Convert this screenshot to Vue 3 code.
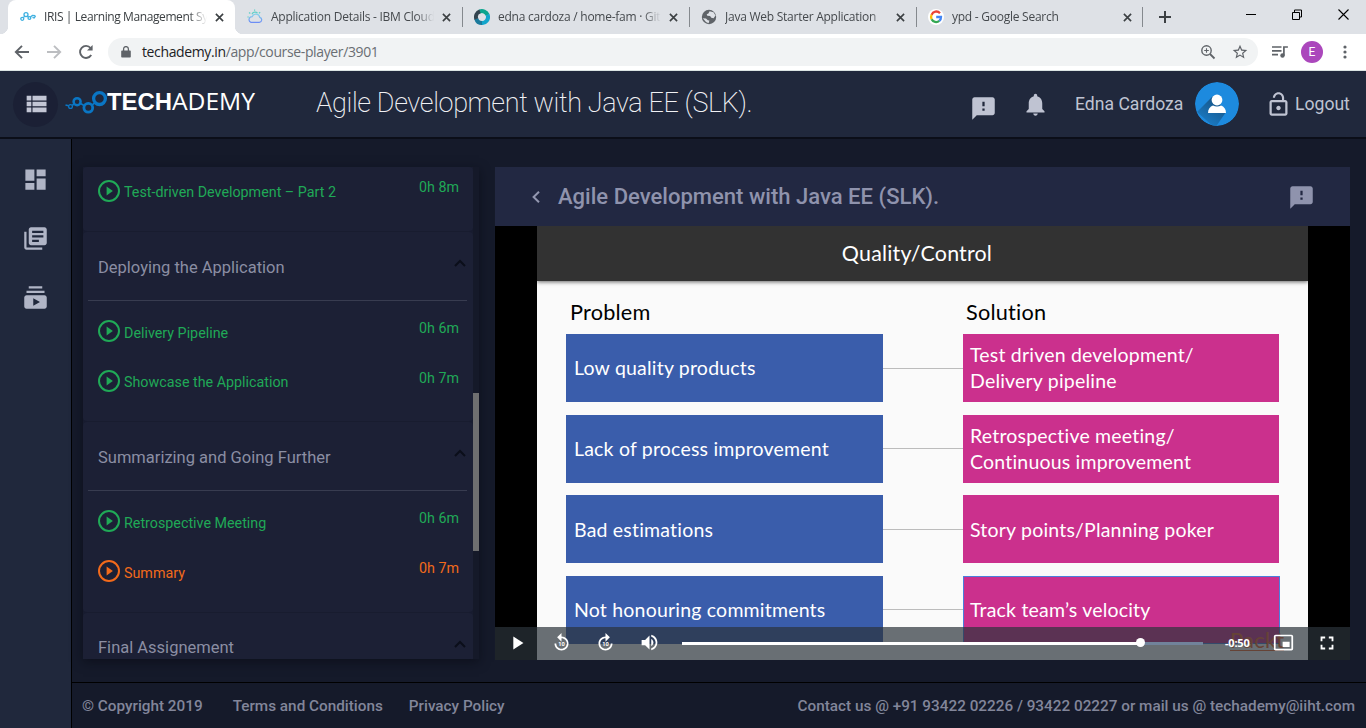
<script setup>
const tabs = [
  { title: 'IRIS | Learning Management System', icon: 'iris', active: true },
  { title: 'Application Details - IBM Cloud', icon: 'cloud' },
  { title: 'edna cardoza / home-fam · GitHub', icon: 'ring' },
  { title: 'Java Web Starter Application', icon: 'globe' },
  { title: 'ypd - Google Search', icon: 'google' },
]
const sections = [
  { items: [{ name: 'Test-driven Development – Part 2', time: '0h 8m' }] },
  {
    title: 'Deploying the Application',
    items: [
      { name: 'Delivery Pipeline', time: '0h 6m' },
      { name: 'Showcase the Application', time: '0h 7m' },
    ],
  },
  {
    title: 'Summarizing and Going Further',
    items: [
      { name: 'Retrospective Meeting', time: '0h 6m' },
      { name: 'Summary', time: '0h 7m', current: true },
    ],
  },
  { title: 'Final Assignement', items: [] },
]
const rows = [
  { problem: 'Low quality products', solution: ['Test driven development/', 'Delivery pipeline'] },
  { problem: 'Lack of process improvement', solution: ['Retrospective meeting/', 'Continuous improvement'] },
  { problem: 'Bad estimations', solution: ['Story points/Planning poker'] },
  { problem: 'Not honouring commitments', solution: ['Track team’s velocity'], selected: true },
]
const sideIcons = [
  'M3 13h8V3H3v10zm0 8h8v-6H3v6zm10 0h8V11h-8v10zm0-18v6h8V3h-8z',
  'M4 6H2v14c0 1.1.9 2 2 2h14v-2H4V6zm16-4H8c-1.1 0-2 .9-2 2v12c0 1.1.9 2 2 2h12c1.1 0 2-.9 2-2V4c0-1.1-.9-2-2-2zm-1 9H9V9h10v2zm-4 4H9v-2h6v2zm4-8H9V5h10v2z',
  'M20 8H4V6h16v2zm-2-6H6v2h12V2zm4 10v8c0 1.1-.9 2-2 2H4c-1.1 0-2-.9-2-2v-8c0-1.1.9-2 2-2h16c1.1 0 2 .9 2 2zm-6 4l-6-3.27v6.53L16 16z',
]
const feedback =
  'M20 2H4c-1.1 0-1.99.9-1.99 2L2 22l4-4h14c1.1 0 2-.9 2-2V4c0-1.1-.9-2-2-2zm-7 12h-2v-2h2v2zm0-4h-2V6h2v4z'
</script>

<template>
  <div class="window">
    <div class="tabstrip">
      <div v-for="t in tabs" :key="t.title" class="tab" :class="{ active: t.active }">
        <svg class="fav" viewBox="0 0 16 16">
          <g v-if="t.icon === 'iris'" fill="none" stroke="#3fb0e0" stroke-width="1.3">
            <circle cx="2.3" cy="9.8" r="1.5" /><circle cx="6" cy="5.6" r="2" /><circle cx="9.4" cy="9" r="1.4" />
            <path d="M3.3 8.6l1.4-1.4M7.4 7l1 1M10.4 8l2-1.5 3 .2M12.5 8.4l1.6.6 1.4-2" />
          </g>
          <g v-else-if="t.icon === 'cloud'" fill="none" stroke-width="1.2">
            <path d="M4 13.4h8.3a2.6 2.6 0 0 0 .5-5.1A4 4 0 0 0 5.2 7.6 3 3 0 0 0 4 13.4z" stroke="url(#cloudfill)" />
            <path d="M5 5.3A3.4 3.4 0 0 1 10.5 4M2 3.4l1.3 1M7.6.4v1.4M13.2 3.2l-1.3 1M.4 8h1.4" stroke="#62d0c8" />
            <defs>
              <linearGradient id="cloudfill" x1="0" y1="0" x2="0" y2="1">
                <stop offset="0" stop-color="#86d3ea" /><stop offset="1" stop-color="#6c8df5" />
              </linearGradient>
            </defs>
          </g>
          <g v-else-if="t.icon === 'ring'" fill="none" stroke-width="4">
            <path d="M5.5 2.6A6 6 0 0 1 13.6 6" stroke="#0aa58e" />
            <path d="M13.5 5.6A6 6 0 0 1 7 13.9" stroke="#12a5cb" />
            <path d="M8 14A6 6 0 0 1 2.2 9.6" stroke="#1b7a9c" />
            <path d="M2.3 10A6 6 0 0 1 6 2.4" stroke="#33444f" />
          </g>
          <g v-else-if="t.icon === 'globe'">
            <circle cx="8" cy="8" r="7.2" fill="#5f6368" />
            <path d="M1.800 9.200l3.200.3 1.800 1.700 1.600.3-.8 2.700-2.600-1.200zM8.600 2.200L7.400 4.600 5.700 5.300l.6 1.500 2.800.2 1.200 1.800 2.300.5 1.900-2.800-2-3.300z" fill="#dee1e6" />
          </g>
          <g v-else>
            <circle cx="8" cy="8" r="8" fill="#fff" />
            <g fill="none" stroke-width="2.3">
              <path d="M12 4.2A5 5 0 0 0 3.6 5.8" stroke="#ea4335" />
              <path d="M3.6 5.8a5 5 0 0 0 0 4.5" stroke="#fbbc05" />
              <path d="M3.6 10.3a5 5 0 0 0 7.7 1.6" stroke="#34a853" />
              <path d="M11.3 11.9A5 5 0 0 0 13 8H8.2" stroke="#4285f4" />
            </g>
          </g>
        </svg>
        <span class="tabtitle">{{ t.title }}</span>
        <svg class="close" viewBox="0 0 10 10"><path d="M1 1l8 8M9 1L1 9" /></svg>
      </div>
      <svg class="newtab" viewBox="0 0 12 12"><path d="M6 0v12M0 6h12" stroke="#3c4043" stroke-width="2" /></svg>
      <svg class="wincontrols" viewBox="0 0 104 12" fill="none" stroke="#000">
        <path d="M0 6.5h10" />
        <path d="M46.500 4.500h7v7h-7zM48.500 4.500v-2.500h7v7h-2" />
        <path d="M92.500 1.500l10 10M102.500 1.500l-10 10" stroke-width="1.1" />
      </svg>
    </div>

    <div class="toolbar">
      <svg class="nav" viewBox="0 0 16 16"><path d="M15 8H2M8 1.800L1.800 8 8 14.200" /></svg>
      <svg class="nav dim" viewBox="0 0 16 16"><path d="M1 8h13M8 1.800L14.200 8 8 14.200" /></svg>
      <svg class="nav" viewBox="0 0 16 16"><path d="M13.200 11A6 6 0 1 1 12.600 4" /><path d="M14.600 1v5.600H9z" class="solid" /></svg>
      <div class="omnibox">
        <svg class="lock" viewBox="0 0 10 12"><path d="M1 4.500h8a.8.800 0 0 1 .8.800v5.400a.8.800 0 0 1-.8.800H1a.8.800 0 0 1-.8-.8V5.300A.8.800 0 0 1 1 4.500z" fill="#5f6368" /><path d="M2.600 5V3a2.400 2.400 0 0 1 4.800 0v2" fill="none" stroke="#5f6368" stroke-width="1.300" /></svg>
        <span class="url"><b>techademy.in</b>/app/course-player/3901</span>
        <svg class="obicon" viewBox="0 0 16 16" fill="none" stroke="#5f6368" stroke-width="1.400"><circle cx="6.500" cy="6.500" r="4.700" /><path d="M10 10l4.500 4.500" stroke-width="1.800" /><path d="M6.500 4.200v4.600M4.200 6.500h4.600" stroke-width="1.100" /></svg>
        <svg class="obicon star" viewBox="1 1 22 22" fill="#5f6368"><path d="M22 9.240l-7.190-.62L12 2 9.190 8.630 2 9.240l5.460 4.730L5.820 21 12 17.270 18.180 21l-1.630-7.030L22 9.240zM12 15.400l-3.760 2.270 1-4.280-3.320-2.880 4.380-.38L12 6.100l1.710 4.040 4.380.38-3.320 2.880 1 4.280L12 15.400z" /></svg>
      </div>
      <svg class="queue" viewBox="0 0 16 14" fill="none" stroke="#5f6368"><path d="M0 2h9.500M0 5.800h9.500M0 9.600h6" stroke-width="1.700" /><circle cx="10.500" cy="10.500" r="2.200" fill="#5f6368" stroke="none" /><path d="M11.900 10.500V2h4" stroke-width="1.700" /></svg>
      <span class="profile">E</span>
      <svg class="dots" viewBox="0 0 4 14" fill="#5f6368"><circle cx="2" cy="2" r="1.600" /><circle cx="2" cy="7" r="1.600" /><circle cx="2" cy="12" r="1.600" /></svg>
    </div>

    <header class="appbar">
      <span class="menu"><svg viewBox="0 0 24 24"><path d="M4 14h4v-4H4v4zm0 5h4v-4H4v4zM4 9h4V5H4v4zm5 5h12v-4H9v4zm0 5h12v-4H9v4zM9 5v4h12V5H9z" /></svg></span>
      <svg class="logo" viewBox="0 0 192 30">
        <g fill="none" stroke="#0a76c4">
          <circle cx="34.500" cy="10.600" r="5.900" stroke-width="3.300" />
          <circle cx="23.300" cy="19.800" r="4.400" stroke-width="2.800" />
          <circle cx="12.100" cy="13.700" r="3.500" stroke-width="2.500" />
          <circle cx="5.500" cy="18.500" r="1.900" stroke-width="1.300" />
          <path d="M.5 17l3 .8M7.200 17.300l2-1.200M15.500 15.500l4 2.200M27 17.200l3-2.600" stroke-width="1.600" />
        </g>
        <text x="42" y="22" class="bold" textLength="65" lengthAdjust="spacingAndGlyphs">TECH</text>
        <text x="107" y="22" class="light" textLength="83" lengthAdjust="spacingAndGlyphs">ADEMY</text>
      </svg>
      <h1>Agile Development with Java EE (SLK).</h1>
      <svg class="hicon fb" viewBox="0 0 24 24"><path :d="feedback" /></svg>
      <svg class="hicon bell" viewBox="0 0 24 24"><path d="M12 22c1.100 0 2-.9 2-2h-4c0 1.100.89 2 2 2zm6-6v-5c0-3.070-1.640-5.640-4.500-6.320V4c0-.83-.67-1.500-1.500-1.500s-1.500.67-1.500 1.500v.68C7.630 5.360 6 7.920 6 11v5l-2 2v1h16v-1l-2-2z" /></svg>
      <span class="user">Edna Cardoza</span>
      <svg class="avatar" viewBox="0 0 44 44">
        <defs>
          <clipPath id="disc"><circle cx="22" cy="22" r="22" /></clipPath>
          <linearGradient id="shade" x1="0.800" y1="0" x2="0.200" y2="1">
            <stop offset="0" stop-color="#164e7c" /><stop offset="1" stop-color="#1b82d0" />
          </linearGradient>
        </defs>
        <g clip-path="url(#disc)">
          <circle cx="22" cy="22" r="22" fill="#1d8ade" />
          <path d="M18 14L2 30l18 16 11-16z" fill="url(#shade)" />
          <circle cx="22" cy="18" r="5.400" fill="#fff" />
          <path d="M13 31c0-4 2-6.500 5-7.500 2.500 1.400 5.500 1.400 8 0 3 1 5 3.500 5 7.500z" fill="#fff" />
        </g>
      </svg>
      <svg class="hicon lockopen" viewBox="0 0 24 24"><path d="M12 17c1.100 0 2-.9 2-2s-.9-2-2-2-2 .9-2 2 .9 2 2 2zm6-9h-1V6c0-2.760-2.240-5-5-5S7 3.240 7 6h1.900c0-1.710 1.390-3.100 3.100-3.100 1.710 0 3.100 1.390 3.100 3.100v2H6c-1.100 0-2 .9-2 2v10c0 1.100.9 2 2 2h12c1.100 0 2-.9 2-2V10c0-1.100-.9-2-2-2zm0 12H6V10h12v10z" /></svg>
      <span class="logout">Logout</span>
    </header>

    <div class="body">
      <nav class="sidebar">
        <svg v-for="d in sideIcons" :key="d" viewBox="0 0 24 24"><path :d="d" /></svg>
      </nav>
      <div class="content">
        <main class="main">
          <div class="course">
            <div class="list">
              <section v-for="(s, i) in sections" :key="i" class="card" :class="{ first: !s.title }">
                <div v-if="s.title" class="cardhead">
                  <span>{{ s.title }}</span>
                  <svg viewBox="0 0 12 8"><path d="M1 7l5-5 5 5" /></svg>
                </div>
                <div v-for="it in s.items" :key="it.name" class="lesson" :class="{ current: it.current }">
                  <svg viewBox="0 0 22 22"><circle cx="11" cy="11" r="10" /><path d="M8.600 6.500v9l6.300-4.500z" /></svg>
                  <span class="name">{{ it.name }}</span>
                  <span class="time">{{ it.time }}</span>
                </div>
              </section>
            </div>
            <div class="scroll"><i></i></div>
          </div>

          <div class="player">
            <div class="playerhead">
              <svg class="back" viewBox="0 0 8 12"><path d="M7 .8L1.600 6 7 11.200" /></svg>
              <h2>Agile Development with Java EE (SLK).</h2>
              <svg class="pfb" viewBox="0 0 24 24"><path :d="feedback" /></svg>
            </div>
            <div class="video">
              <div class="slide">
                <div class="slidetitle">Quality/Control</div>
                <div class="heads"><span>Problem</span><span>Solution</span></div>
                <div class="rows">
                  <div v-for="r in rows" :key="r.problem" class="row">
                    <div class="box blue">{{ r.problem }}</div>
                    <i class="line"></i>
                    <div class="box pink" :class="{ selected: r.selected }">
                      <span v-for="l in r.solution" :key="l">{{ l }}</span>
                    </div>
                  </div>
                </div>
                <span class="mark">Packt</span>
              </div>
              <div class="controls">
                <svg class="play" viewBox="0 0 24 24"><path d="M8 5v14l11-7z" /></svg>
                <svg class="ctl" viewBox="0 0 24 24"><path d="M12 5V1L7 6l5 5V7c3.310 0 6 2.690 6 6s-2.690 6-6 6-6-2.690-6-6H4c0 4.420 3.580 8 8 8s8-3.580 8-8-3.580-8-8-8z" /><text x="12" y="15.800">10</text></svg>
                <svg class="ctl" viewBox="0 0 24 24"><path d="M12 5V1l5 5-5 5V7c-3.310 0-6 2.690-6 6s2.690 6 6 6 6-2.690 6-6h2c0 4.420-3.580 8-8 8s-8-3.580-8-8 3.580-8 8-8z" /><text x="12" y="15.800">10</text></svg>
                <svg class="ctl" viewBox="0 0 24 24"><path d="M3 9v6h4l5 5V4L7 9H3zm13.500 3c0-1.770-1.020-3.290-2.500-4.030v8.050c1.480-.73 2.500-2.250 2.500-4.020zM14 3.230v2.060c2.890.86 5 3.540 5 6.710s-2.110 5.850-5 6.710v2.060c4.010-.91 7-4.490 7-8.770s-2.990-7.860-7-8.770z" /></svg>
                <div class="track"><i class="played"></i><i class="knob"></i><i class="buffered"></i></div>
                <span class="remain">-0:50</span>
                <svg class="pip" viewBox="0 0 24 24"><path d="M19 11h-8v6h8v-6zm4 8V4.980C23 3.880 22.100 3 21 3H3c-1.100 0-2 .88-2 1.980V19c0 1.100.9 2 2 2h18c1.100 0 2-.9 2-2zm-2 .02H3V4.970h18v14.050z" /></svg>
                <svg class="full" viewBox="0 0 24 24"><path d="M7 14H5v5h5v-2H7v-3zm-2-4h2V7h3V5H5v5zm12 7h-3v2h5v-5h-2v3zM14 5v2h3v3h2V5h-5z" /></svg>
              </div>
            </div>
          </div>
        </main>
        <footer>
          <span class="copy">© Copyright 2019</span>
          <span class="terms">Terms and Conditions</span>
          <span class="privacy">Privacy Policy</span>
          <span class="contact">Contact us @ +91 93422 02226 / 93422 02227 or mail us @ techademy@iiht.com</span>
        </footer>
      </div>
    </div>
  </div>
</template>

<style>
body { margin: 0; overflow: hidden; }
</style>

<style scoped>
* { box-sizing: border-box; }
svg { flex: none; display: block; }
.window { width: 1366px; height: 728px; display: flex; flex-direction: column; overflow: hidden; font-family: Roboto, sans-serif; background: #151a2a; white-space: nowrap; }

.tabstrip { height: 34px; flex: none; background: #dee1e6; display: flex; padding-left: 8px; font: 12px "Open Sans", sans-serif; color: #45494d; }
.tab { width: 227px; height: 34px; display: flex; align-items: center; padding: 0 10px 0 12px; position: relative; }
.tab.active { background: #fff; border-radius: 8px 8px 0 0; color: #3c4043; }
.tab.active::before { content: ""; position: absolute; left: -8px; bottom: 0; width: 8px; height: 8px; background: radial-gradient(circle at 0 0, #dee1e6 8px, #fff 8.500px); }
.tab.active::after { content: ""; position: absolute; right: -8px; bottom: 0; width: 8px; height: 8px; background: radial-gradient(circle at 100% 0, #dee1e6 8px, #fff 8.500px); }
.tab:nth-child(n + 3)::before, .tab:nth-child(5)::after { content: ""; position: absolute; left: 0; top: 7px; width: 1px; height: 20px; background: #85898e; }
.tab:nth-child(5)::after { left: 226px; }
.fav { width: 16px; height: 16px; }
.tabtitle { width: 163px; margin: -1px 0 0 8px; overflow: hidden; letter-spacing: -0.25px; -webkit-mask-image: linear-gradient(90deg, #000 145px, transparent 163px); mask-image: linear-gradient(90deg, #000 145px, transparent 163px); }
.active .tabtitle { letter-spacing: -0.4px; }
.close { width: 9px; height: 9px; margin-left: 8px; fill: none; stroke: #3c4043; stroke-width: 1.8; }
.newtab { width: 12px; height: 12px; margin: 11px 0 0 16px; }
.wincontrols { width: 104px; height: 12px; margin: 8px 0 0 75px; }

.toolbar { height: 37px; flex: none; background: #fff; border-bottom: 1px solid #dbe4e3; display: flex; align-items: center; padding-left: 14px; }
.nav { width: 16px; height: 16px; margin-right: 16px; fill: none; stroke: #5f6368; stroke-width: 1.9; }
.nav.dim { stroke: #bcbec1; }
.nav .solid { fill: #5f6368; stroke: none; }
.omnibox { width: 1150px; height: 28px; margin-left: -2px; border-radius: 14px; background: #f1f3f4; display: flex; align-items: center; padding: 0 10px 0 13px; }
.lock { width: 10px; height: 12px; }
.url { margin: -2px 0 0 11px; flex: 1; font: 14px "Open Sans", sans-serif; color: #6a6e73; letter-spacing: -0.37px; }
.url b { font-weight: 400; color: #202124; }
.obicon { width: 16px; height: 16px; }
.star { margin-left: 16px; }
.queue { width: 16px; height: 14px; margin-left: 14px; }
.profile { width: 22px; height: 22px; margin-left: 13px; border-radius: 50%; background: #ab47bc; color: #fff; font-size: 12px; line-height: 22px; text-align: center; }
.dots { width: 4px; height: 14px; margin-left: 20px; }

.appbar { height: 68px; flex: none; background: #20283c; border-bottom: 2px solid #0b0e18; display: flex; align-items: center; padding-left: 13px; color: #bfc3d2; }
.appbar > * { flex: none; }
.menu { width: 45px; height: 45px; border-radius: 50%; background: #1b2035; display: flex; align-items: center; justify-content: center; }
.menu svg { width: 28px; height: 28px; fill: #c3c6d5; }
.logo { width: 192px; height: 30px; margin: -3px 0 0 7px; overflow: visible; }
.logo text { fill: #fff; font-size: 24.500px; }
.logo .bold { font-family: "Liberation Sans", sans-serif; font-weight: 700; }
.logo .light { font-family: "Open Sans", sans-serif; font-weight: 400; }
h1 { margin: -2px 0 0 59px; width: 440px; font-weight: 200; font-size: 27px; letter-spacing: -0.37px; color: #f0f1f4; }
.hicon { width: 27px; height: 27px; fill: #bfc3d2; }
.fb { margin: 9px 0 0 213.500px; }
.bell { margin-left: 25.500px; }
.user { margin: -1px 0 0 26px; width: 108px; font-size: 17.600px; }
.avatar { width: 44px; height: 44px; margin-left: 12px; }
.lockopen { margin-left: 26px; }
.logout { margin: -1px 0 0 3px; font-size: 17.600px; }

.body { flex: 1; display: flex; min-height: 0; }
.sidebar { width: 72px; flex: none; background: #20283c; border-right: 1px solid #000; display: flex; flex-direction: column; gap: 32px; padding: 27px 0 0 21.500px; }
.sidebar svg { width: 27px; height: 27px; fill: #b0b5c6; }
.content { flex: 1; display: flex; flex-direction: column; min-width: 0; }
.main { height: 543px; flex: none; display: flex; padding: 28px 16px 0 11px; }
.course { width: 396px; height: 492px; display: flex; box-shadow: 0 3px 10px rgba(8, 10, 20, 0.6); background: #151929; }
.list { width: 390px; height: 492px; overflow: hidden; display: flex; flex-direction: column; background: #181c2f; }
.card { height: 190.400px; flex: none; background: #1c2035; border-radius: 4px; border-bottom: 1px solid #181c2f; }
.card.first { height: 65px; }
.card.first .lesson { margin-top: -1.500px; }
.card.first .lesson svg { margin-top: 1px; }
.cardhead { height: 69px; margin: 0 6px 5.300px 5px; border-bottom: 1px solid #383c50; display: flex; align-items: center; justify-content: space-between; padding: 2px 1px 0 10px; font-size: 16.500px; color: #8b8ea3; }
.cardhead svg { width: 12px; height: 8px; margin-top: -8px; fill: none; stroke: #0b0e1a; stroke-width: 2; }
.lesson { height: 49.600px; display: flex; align-items: center; padding: 0 14px 0 15px; color: #20a957; font-size: 14.300px; }
.lesson svg { width: 22px; height: 22px; fill: none; stroke: currentColor; stroke-width: 2; }
.lesson path { fill: currentColor; stroke: none; }
.name { margin: 3.500px 0 0 4px; flex: 1; font-size: 14.300px; }
.time { margin-top: -6px; }
.lesson.current { color: #f26a1b; }
.scroll { width: 6px; padding-top: 226px; }
.scroll i { display: block; height: 158px; background: #6f6f70; }

.player { width: 855px; margin-left: 16px; }
.playerhead { height: 59px; background: #222842; display: flex; align-items: center; padding: 0 36px 0 37px; }
.back { width: 8px; height: 12px; fill: none; stroke: #9397b0; stroke-width: 2; }
h2 { flex: 1; margin: 0 0 0 18px; font-size: 22.050px; font-weight: 500; color: #8f93ad; }
.pfb { width: 27px; height: 27px; margin: 2px -0.500px 0 0; fill: #8f93ad; }
.video { height: 434px; background: #000; position: relative; padding: 0 42px; font-family: Lato, sans-serif; overflow: hidden; }
.slide { height: 434px; background: #fafafa; overflow: hidden; position: relative; letter-spacing: 0.2px; }
.slidetitle { height: 55px; background: #323232; color: #fff; font-size: 21.400px; line-height: 54px; text-align: center; padding-right: 11px; box-shadow: 0 1px 4px rgba(0, 0, 0, 0.6); }
.heads { display: grid; grid-template-columns: 396px 1fr; padding-left: 33px; height: 53px; line-height: 62px; font-size: 21.700px; color: #000; }
.rows { display: grid; gap: 12.300px; padding-left: 29px; }
.row { display: flex; align-items: center; height: 68.300px; }
.box { width: 317px; height: 100%; padding: 0.500px 0 0 8px; color: #fff; font-size: 19.500px; line-height: 26px; display: flex; flex-direction: column; justify-content: center; }
.blue { background: #3a5dab; }
.pink { width: 316px; padding-left: 7px; background: #cb308d; }
.selected { width: 317px; border: 1px solid #4a7fdc; padding-left: 6px; }
.line { width: 80px; height: 1px; background: #bcbcbc; }
.mark { position: absolute; left: 693px; top: 403px; border-bottom: 1px solid #f26a2c; color: #f26a2c; font: 22px/21px Lato, sans-serif; }
.controls { position: absolute; left: 0; right: 0; bottom: 0; height: 33px; padding-bottom: 2px; background: rgba(43, 51, 58, 0.7); display: flex; align-items: center; }
.controls svg { fill: #fff; }
.play { width: 22px; height: 22px; margin-left: 11px; }
.ctl { width: 21px; height: 21px; margin-left: 23px; }
.play + .ctl { margin-left: 22.500px; }
.ctl text { font: 700 6.500px Roboto, sans-serif; text-anchor: middle; fill: #fff; }
.track { width: 541px; margin: 1px 0 0 22px; height: 3px; display: flex; align-items: center; }
.played { width: 459px; height: 3px; background: #fff; }
.knob { width: 9px; height: 9px; margin: -1px -4.500px 0 -4.500px; border-radius: 50%; background: #fff; z-index: 1; }
.buffered { width: 62px; height: 3px; background: #71839b; }
.remain { width: 48px; padding-left: 2.500px; font: 700 11px "Open Sans", sans-serif; letter-spacing: -0.2px; color: #fff; }
.pip { width: 21px; height: 21px; margin-left: 2px; }
.full { width: 22px; height: 22px; margin-left: 22.500px; }

footer { flex: 1; border-top: 1px solid #000; display: flex; align-items: center; padding: 0 11px 0 10px; font-size: 15.300px; font-weight: 500; color: #82869a; }
.terms { margin-left: 30px; }
.privacy { margin-left: 26px; }
.contact { margin-left: auto; }
</style>
